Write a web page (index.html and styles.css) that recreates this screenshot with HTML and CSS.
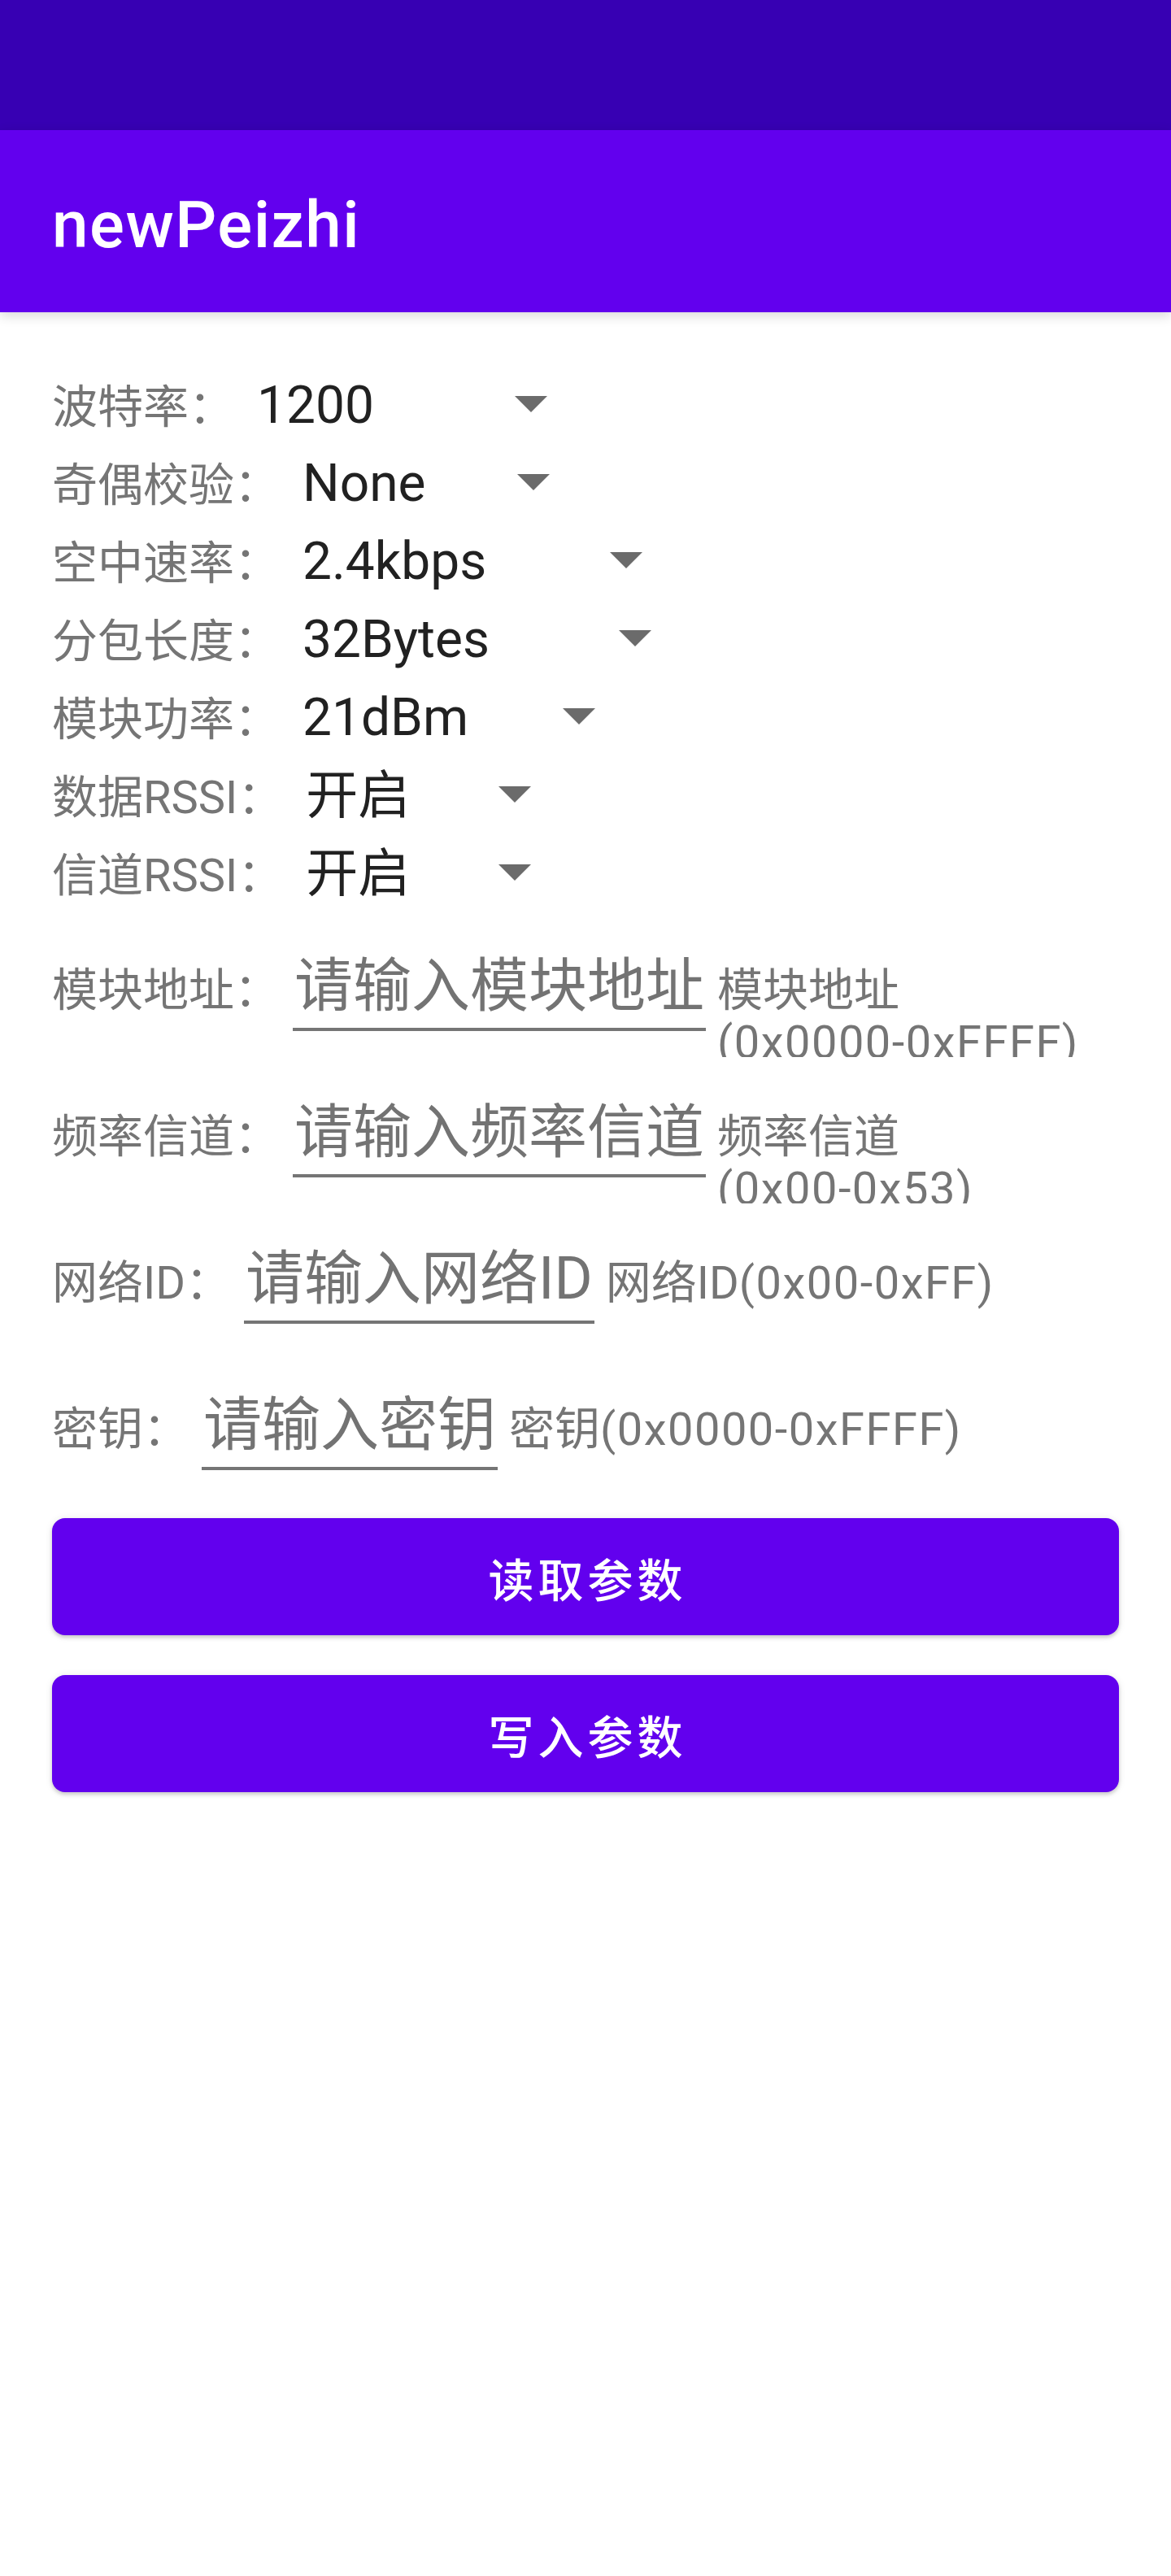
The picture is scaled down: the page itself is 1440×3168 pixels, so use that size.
FILE: index.html
```html
<!DOCTYPE html>
<html lang="zh-CN">
<head>
<meta charset="utf-8">
<title>newPeizhi</title>
<link rel="stylesheet" href="styles.css">
</head>
<body>
<div class="status"></div>
<header class="appbar"><h1 class="title">newPeizhi</h1></header>
<main class="content">
  <section class="spinners">
    <div class="sp-row"><span class="label">波特率：</span><div class="spinner"><span class="value w-baud">1200</span><span class="arrow"></span></div></div>
    <div class="sp-row"><span class="label">奇偶校验：</span><div class="spinner"><span class="value w-parity">None</span><span class="arrow"></span></div></div>
    <div class="sp-row"><span class="label">空中速率：</span><div class="spinner"><span class="value w-air">2.4kbps</span><span class="arrow"></span></div></div>
    <div class="sp-row"><span class="label">分包长度：</span><div class="spinner"><span class="value w-pkt">32Bytes</span><span class="arrow"></span></div></div>
    <div class="sp-row"><span class="label">模块功率：</span><div class="spinner"><span class="value w-pwr">21dBm</span><span class="arrow"></span></div></div>
    <div class="sp-row"><span class="label">数据RSSI：</span><div class="spinner"><span class="value w-rssi">开启</span><span class="arrow"></span></div></div>
    <div class="sp-row"><span class="label">信道RSSI：</span><div class="spinner"><span class="value w-rssi">开启</span><span class="arrow"></span></div></div>
  </section>
  <section class="fields">
    <div class="field-row"><span class="label">模块地址：</span><div class="edit"><span class="hint">请输入模块地址</span></div><div class="helper">模块地址<span class="nobr">(0x0000-0xFFFF)</span></div></div>
    <div class="field-row"><span class="label">频率信道：</span><div class="edit"><span class="hint">请输入频率信道</span></div><div class="helper">频率信道<span class="nobr">(0x00-0x53)</span></div></div>
    <div class="field-row"><span class="label">网络ID：</span><div class="edit"><span class="hint">请输入网络ID</span></div><div class="helper">网络ID<span class="nobr">(0x00-0xFF)</span></div></div>
    <div class="field-row"><span class="label">密钥：</span><div class="edit"><span class="hint">请输入密钥</span></div><div class="helper">密钥<span class="nobr">(0x0000-0xFFFF)</span></div></div>
  </section>
  <section class="buttons">
    <button class="btn">读取参数</button>
    <button class="btn">写入参数</button>
  </section>
</main>
</body>
</html>
```

FILE: styles.css
```css
* { box-sizing: border-box; margin: 0; padding: 0; }
html, body { background: #ffffff; }
body {
  width: 1440px;
  min-height: 3168px;
  font-family: Roboto, "Noto Sans CJK SC", sans-serif;
}
.status { height: 160px; background: #3700B3; }
.appbar {
  height: 224px;
  background: #6200EE;
  display: flex;
  align-items: center;
  padding-left: 64px;
  box-shadow: 0 4px 14px rgba(0, 0, 0, 0.16);
  position: relative;
  z-index: 1;
}
.title {
  font-size: 80px;
  font-weight: 500;
  line-height: 80px;
  letter-spacing: 1.5px;
  color: #ffffff;
  margin-top: 9px;
}
.content { padding: 67px 64px 0; }

.sp-row {
  display: flex;
  align-items: baseline;
  height: 96px;
  line-height: 96px;
}
.label {
  font-size: 56px;
  color: #757575;
  white-space: nowrap;
}
.spinner {
  display: flex;
  align-items: baseline;
  padding-left: 28px;
}
.value {
  font-size: 64px;
  color: #212121;
  white-space: nowrap;
}
.w-baud { min-width: 317px; }
.w-parity { min-width: 264px; }
.w-air { min-width: 378px; }
.w-pkt { min-width: 389px; }
.w-pwr { min-width: 320px; }
.w-rssi { min-width: 237px; }
.arrow {
  width: 0;
  height: 0;
  border-left: 20px solid transparent;
  border-right: 20px solid transparent;
  border-top: 20px solid #6b6b6b;
  align-self: center;
  margin-bottom: 4px;
}

.fields {
  margin-top: 48px;
  display: flex;
  flex-direction: column;
  gap: 50px;
}
.field-row {
  display: flex;
  align-items: baseline;
  height: 130px;
}
.field-row .label { line-height: 64px; }
.edit {
  margin-left: 16px;
  padding: 0 2px 9px;
  border-bottom: 4px solid #757575;
}
.hint {
  font-size: 72px;
  line-height: 84px;
  color: #737373;
  white-space: nowrap;
}
.helper {
  margin-left: 14px;
  font-size: 56px;
  line-height: 64px;
  color: #757575;
  height: 114px;
  overflow: hidden;
  flex: 1;
  min-width: 0;
}
.nobr { white-space: nowrap; letter-spacing: 1.5px; }

.buttons {
  margin-top: 26px;
  display: flex;
  flex-direction: column;
  gap: 49px;
}
.btn {
  height: 144px;
  border: none;
  border-radius: 16px;
  background: #6200EE;
  color: #ffffff;
  font-family: Roboto, "Noto Sans CJK SC", sans-serif;
  font-size: 56px;
  font-weight: 500;
  letter-spacing: 5px;
  padding-left: 5px;
  box-shadow: 0 3px 4px rgba(0, 0, 0, 0.16), 0 1px 10px rgba(0, 0, 0, 0.1);
}
```
